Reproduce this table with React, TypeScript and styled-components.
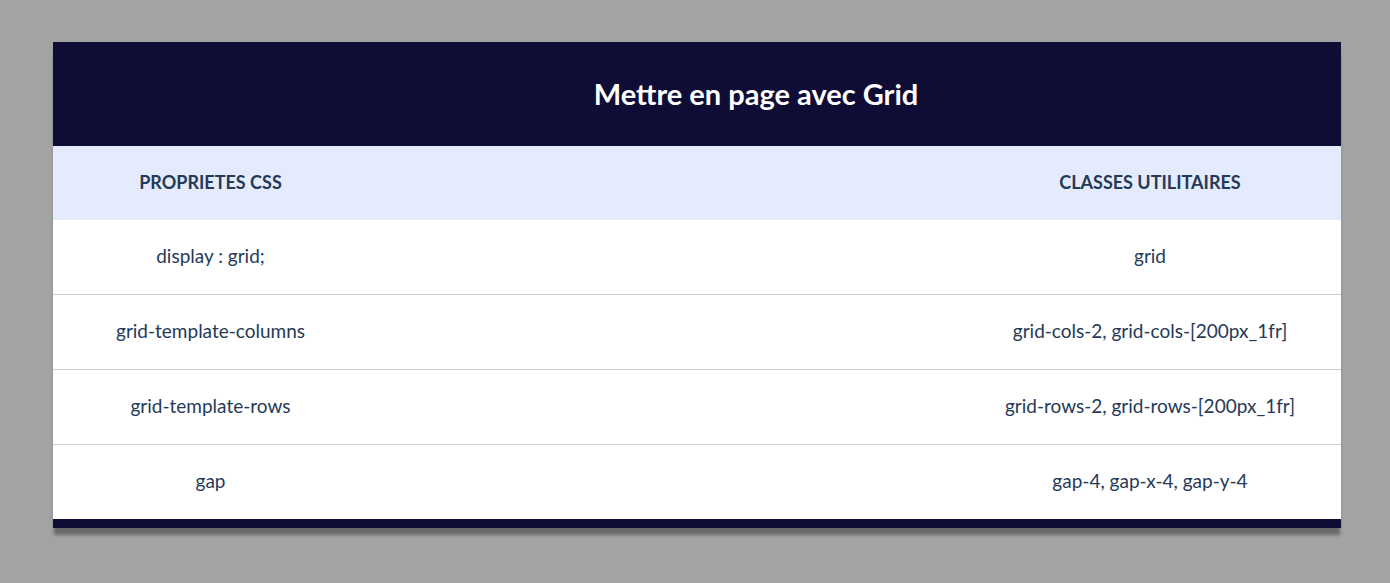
import React from "react";
import styled, { createGlobalStyle } from "styled-components";

const Global = createGlobalStyle`
  html, body { margin: 0; padding: 0; }
  body {
    background: #a3a3a3;
    font-family: Lato, "Noto Sans", sans-serif;
    width: 1390px;
    height: 583px;
    overflow: hidden;
  }
`;

const Page = styled.div`
  padding: 42px 49px 0 53px;
`;

const Card = styled.section`
  background: #ffffff;
  box-shadow: 0 8px 3px -1px rgba(60, 60, 60, 0.55);
  border-bottom: 9px solid #0f0d35;
`;

const Title = styled.h1`
  margin: 0;
  height: 104px;
  padding-left: 118px;
  padding-bottom: 2px;
  box-sizing: border-box;
  display: flex;
  align-items: center;
  justify-content: center;
  background: #0f0d35;
  color: #ffffff;
  font-size: 29px;
  font-weight: 700;
`;

const Row = styled.div<{ $head?: boolean; $last?: boolean }>`
  display: grid;
  grid-template-columns: 315px 382px;
  justify-content: space-between;
  align-items: center;
  height: 74px;
  padding-bottom: 3px;
  box-sizing: border-box;
  background: ${(p) => (p.$head ? "#e4ebfd" : "#ffffff")};
  border-bottom: ${(p) => (p.$head || p.$last ? "none" : "1px solid #cfcfcf")};
  ${(p) => (p.$head || p.$last ? "" : "height: 75px;")}
`;

const Cell = styled.div<{ $head?: boolean }>`
  text-align: center;
  color: #253a57;
  font-size: ${(p) => (p.$head ? "18px" : "19px")};
  font-weight: ${(p) => (p.$head ? 700 : 400)};
  text-transform: ${(p) => (p.$head ? "uppercase" : "none")};
`;

const rows: [string, string][] = [
  ["display : grid;", "grid"],
  ["grid-template-columns", "grid-cols-2, grid-cols-[200px_1fr]"],
  ["grid-template-rows", "grid-rows-2, grid-rows-[200px_1fr]"],
  ["gap", "gap-4, gap-x-4, gap-y-4"],
];

export default function App() {
  return (
    <>
      <Global />
      <Page>
        <Card>
          <Title>Mettre en page avec Grid</Title>
          <Row $head>
            <Cell $head>Proprietes CSS</Cell>
            <Cell $head>Classes utilitaires</Cell>
          </Row>
          {rows.map(([a, b], i) => (
            <Row key={a} $last={i === rows.length - 1}>
              <Cell>{a}</Cell>
              <Cell>{b}</Cell>
            </Row>
          ))}
        </Card>
      </Page>
    </>
  );
}
